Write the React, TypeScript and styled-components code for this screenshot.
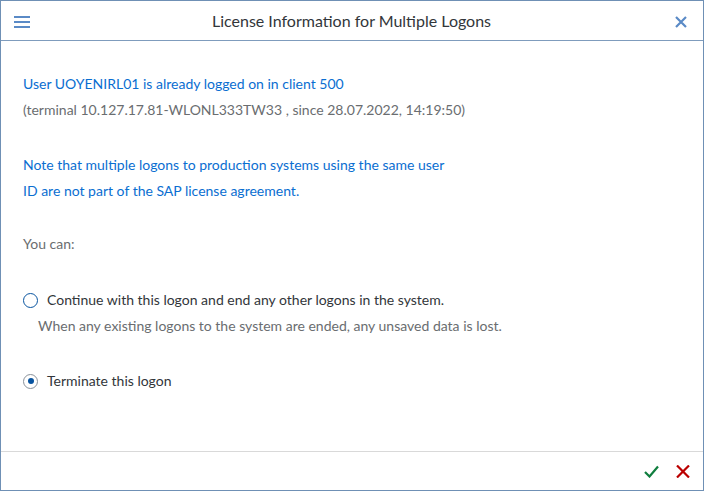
import styled, { createGlobalStyle } from "styled-components";

const GlobalStyle = createGlobalStyle`
  html, body {
    margin: 0;
    padding: 0;
    background: #ffffff;
  }
  * {
    box-sizing: border-box;
  }
`;

const Dialog = styled.div`
  width: 100vw;
  height: 100vh;
  display: flex;
  flex-direction: column;
  border: 1px solid #6f90b5;
  background: #ffffff;
  font-family: Lato, "Liberation Sans", sans-serif;
`;

const Header = styled.div`
  height: 40px;
  display: flex;
  align-items: center;
  justify-content: space-between;
  padding: 0 11px 0 10px;
  border-bottom: 1px solid #7f9cbd;
  flex-shrink: 0;
`;

const IconButton = styled.button`
  width: 22px;
  height: 22px;
  padding: 0;
  border: none;
  background: transparent;
  display: flex;
  align-items: center;
  justify-content: center;
  cursor: pointer;
`;

const HeaderIcon = styled(IconButton)`
  margin-top: 2px;
`;

const Title = styled.h1`
  margin: 0;
  font-size: 16px;
  font-weight: 400;
  color: #32363a;
`;

const Content = styled.div`
  flex: 1;
  padding: 30px 22px 0 22px;
`;

const Paragraph = styled.p<{ $gap?: number }>`
  margin: 0 0 ${(p) => p.$gap ?? 29}px 0;
`;

const Line = styled.div<{ $tone: "blue" | "gray" | "dark" }>`
  font-size: 14px;
  line-height: 26px;
  color: ${(p) =>
    p.$tone === "blue" ? "#0a6ed1" : p.$tone === "gray" ? "#6a6d70" : "#32363a"};
`;

const Option = styled.label`
  display: flex;
  align-items: center;
  gap: 9px;
  height: 26px;
  cursor: pointer;
`;

const Radio = styled.span<{ $checked?: boolean }>`
  width: 15px;
  height: 15px;
  border-radius: 50%;
  border: 1px solid ${(p) => (p.$checked ? "#89919a" : "#0854a0")};
  display: flex;
  align-items: center;
  justify-content: center;
  flex-shrink: 0;

  &::after {
    content: "";
    display: ${(p) => (p.$checked ? "block" : "none")};
    width: 6px;
    height: 6px;
    border-radius: 50%;
    background: #0854a0;
  }
`;

const Hint = styled(Line)`
  padding-left: 15px;
`;

const Footer = styled.div`
  height: 39px;
  display: flex;
  align-items: center;
  justify-content: flex-end;
  gap: 10px;
  padding-right: 9px;
  border-top: 1px solid #d9d9d9;
  flex-shrink: 0;
`;

function App() {
  return (
    <>
      <GlobalStyle />
      <Dialog>
        <Header>
          <HeaderIcon aria-label="Menu">
            <svg width="16" height="12" viewBox="0 0 16 12">
              <rect x="0" y="0" width="16" height="2" fill="#5a8ac6" />
              <rect x="0" y="5" width="16" height="2" fill="#5a8ac6" />
              <rect x="0" y="10" width="16" height="2" fill="#5a8ac6" />
            </svg>
          </HeaderIcon>
          <Title>License Information for Multiple Logons</Title>
          <HeaderIcon aria-label="Close">
            <svg width="12" height="12" viewBox="0 0 12 12">
              <path d="M1 1 L11 11 M11 1 L1 11" stroke="#5a8ac6" strokeWidth="2.2" />
            </svg>
          </HeaderIcon>
        </Header>
        <Content>
          <Paragraph>
            <Line $tone="blue">User UOYENIRL01 is already logged on in client 500</Line>
            <Line $tone="gray">
              (terminal 10.127.17.81-WLONL333TW33 , since 28.07.2022, 14:19:50)
            </Line>
          </Paragraph>
          <Paragraph $gap={27}>
            <Line $tone="blue">
              Note that multiple logons to production systems using the same user
            </Line>
            <Line $tone="blue">ID are not part of the SAP license agreement.</Line>
          </Paragraph>
          <Paragraph $gap={30}>
            <Line $tone="gray">You can:</Line>
          </Paragraph>
          <Paragraph>
            <Option>
              <Radio />
              <Line $tone="dark">
                Continue with this logon and end any other logons in the system.
              </Line>
            </Option>
            <Hint $tone="gray">
              When any existing logons to the system are ended, any unsaved data is lost.
            </Hint>
          </Paragraph>
          <Option>
            <Radio $checked />
            <Line $tone="dark">Terminate this logon</Line>
          </Option>
        </Content>
        <Footer>
          <IconButton aria-label="Confirm">
            <svg width="15" height="13" viewBox="0 0 15 13">
              <path d="M1 7 L5.5 11.5 L14 1.5" stroke="#107e3e" strokeWidth="2.2" fill="none" />
            </svg>
          </IconButton>
          <IconButton aria-label="Cancel">
            <svg width="14" height="13" viewBox="0 0 14 13">
              <path d="M1 0.5 L13 12.5 M13 0.5 L1 12.5" stroke="#bb0000" strokeWidth="2.2" />
            </svg>
          </IconButton>
        </Footer>
      </Dialog>
    </>
  );
}

export default App;
